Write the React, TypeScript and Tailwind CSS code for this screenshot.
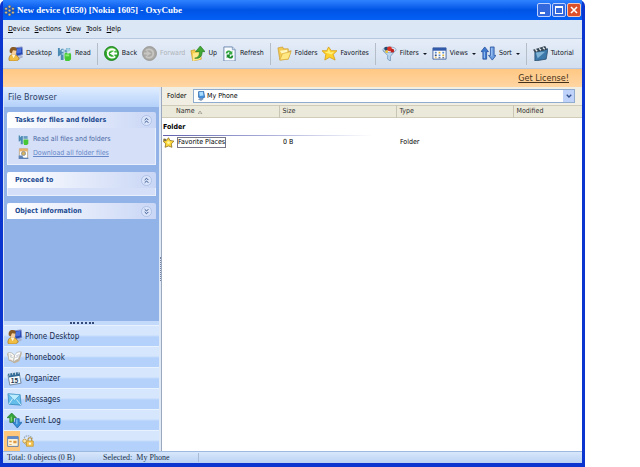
import type { ReactNode } from "react";

interface IconProps {
    className?: string;
    children: ReactNode;
}

function Icon({ className = "size-[15px]", children }: IconProps) {
    return (
        <svg viewBox="0 0 16 16" className={`${className} shrink-0`} aria-hidden="true">
            {children}
        </svg>
    );
}

const DesktopIcon = () => (
    <Icon>
        <path d="M7 2l8-1 1 8-7 2z" fill="#2448b4" stroke="#8792c8" />
        <path d="M9 3l5-1v5l-4 1z" fill="#4b73e0" />
        <path d="M10 12l5-2 1 2-5 2z" fill="#aab3cf" />
        <path d="M1 15c0-4 1-6 5-6s5 3 6 5l-3 2H2z" fill="#f0bd45" stroke="#a87416" strokeWidth=".7" />
        <path d="M4 9l2 4 2-4z" fill="#fff4d8" />
        <circle cx="6" cy="6" r="3" fill="#f7cf9c" />
        <path d="M2 7c-1-4 1-6 4-6 3 0 4 2 3 4C7 5 6 4 5 5L4 8z" fill="#8a5a24" />
    </Icon>
);

const ReadIcon = () => (
    <Icon>
        <path d="M1 2h2v3l2-2h2v12H4V9L2 11H1z" fill="#4c8bb4" />
        <path d="M5 4h2v2H5zM5 8h2v1H5z" fill="#c9edff" />
        <path d="M8 4h2V2h4v3h-3v2H8z" fill="#679bc0" />
        <circle cx="12" cy="4" r="2" fill="#a2d4e5" />
        <path d="M8 8l2-1 1 1h2l1-1 1 2v5l-2 2H9l-1-3z" fill="#45c736" />
        <path d="M9 9h4v2H9z" fill="#8bef70" />
    </Icon>
);

const BackIcon = () => (
    <Icon>
        <circle cx="8" cy="8" r="7.4" fill="#31aa2d" stroke="#167b17" />
        <path d="M2 6c2-5 10-6 12 0-5-2-8 1-12 0z" fill="#81d66d" />
        <path d="M12 5C9 2 4 4 4 8s5 6 8 3" fill="none" stroke="#fff" strokeWidth="1.8" />
        <path d="M11 5L6 8l5 3V9h3V7h-3z" fill="#fff" />
    </Icon>
);

const ForwardIcon = () => (
    <Icon>
        <circle cx="8" cy="8" r="7.4" fill="#aaa9a6" stroke="#969694" />
        <path d="M4 5c3-3 8-1 8 3s-5 6-8 3" fill="none" stroke="#c7c6c2" strokeWidth="1.8" />
        <path d="M5 5l5 3-5 3V9H2V7h3z" fill="#c7c6c2" />
    </Icon>
);

const UpIcon = () => (
    <Icon>
        <path d="M1 5l4-1 1 2h5l1 8-9 2z" fill="#f4cc4d" stroke="#c59221" strokeWidth=".7" />
        <path d="M3 8l9-2-1 8-8 2z" fill="#ffe98a" />
        <path d="M5 13c5-1 5-4 5-7H6l5-6 5 6h-3c0 5-3 8-8 7z" fill="#42a935" stroke="#24791d" strokeWidth=".7" />
    </Icon>
);

const RefreshIcon = () => (
    <Icon>
        <path d="M2 1h9l3 3v12H2z" fill="#f8fbff" stroke="#6b86ad" />
        <path d="M11 1v3h3" fill="#c8d8ec" stroke="#6b86ad" strokeWidth=".7" />
        <path d="M4 8c0-4 4-4 6-2l1-1v4H7l1-2C7 6 6 7 6 8z" fill="#36a943" />
        <path d="M12 10c0 4-4 4-6 2l-1 1V9h4l-1 2c1 1 2 0 2-1z" fill="#1c8b2c" />
    </Icon>
);

const FoldersIcon = () => (
    <Icon>
        <path d="M1 2l5-1 1 2h5v3l3-1-3 9-9 1z" fill="#f3cb53" stroke="#c8972b" strokeWidth=".7" />
        <path d="M3 5l8-1v3L5 8z" fill="#fff7bf" />
        <path d="M3 15l3-7 9-2-3 8z" fill="#ffe781" stroke="#d3a437" strokeWidth=".6" />
    </Icon>
);

const StarIcon = () => (
    <Icon>
        <path d="M7 1l3 4 6 0-4 4 2 6-6-3-5 3 1-6-4-4 5 0z" fill="#ffd22e" stroke="#d29a13" strokeWidth=".8" />
        <path d="M7 3l2 4 4-1-3 3-3-1-4-1 3-1z" fill="#fff07d" />
    </Icon>
);

const BadgeStarIcon = () => (
    <Icon className="size-[11px]">
        <path d="M8 1l2 4 6 1-4 4 1 5-5-2-5 2 1-5-4-4 5-1z" fill="#ffd93b" stroke="#8f7526" strokeWidth="1.2" />
        <path d="M1 2l4 1-1 3-4-1z" fill="#7d6f40" />
        <circle cx="8" cy="8" r="2" fill="#fff9a8" />
    </Icon>
);

const FilterIcon = () => (
    <Icon>
        <path d="M1 5l13 0-5 6v5l-3-2v-4z" fill="#bcd7ee" stroke="#6d93b8" strokeWidth=".8" />
        <ellipse cx="8" cy="4" rx="7" ry="3" fill="#e2eefa" stroke="#7692b1" strokeWidth=".7" />
        <circle cx="4.5" cy="3" r="2.2" fill="#244b70" />
        <circle cx="8" cy="3" r="2.6" fill="#dc3326" />
        <circle cx="11" cy="5" r="2" fill="#bb2320" />
        <circle cx="5" cy="6" r="1.5" fill="#edc53b" />
    </Icon>
);

const ViewsIcon = () => (
    <Icon>
        <path d="M1 2h14v12H1z" fill="#fff" stroke="#4564a0" />
        <path d="M1 2h14v3H1z" fill="#315aaa" />
        <path d="M3 6h2v2H3zM7 9h2v2H7zM11 6h2v2h-2z" fill="#568ad0" />
        <path d="M7 6h2v2H7zM3 12h2v1H3zM11 9h2v2h-2z" fill="#d6b23f" />
        <path d="M3 9h2v2H3zM7 12h2v1H7zM11 12h2v1h-2z" fill="#394d70" />
    </Icon>
);

const SortIcon = () => (
    <Icon>
        <path d="M4 1l4 5H6v8H2V6H0z" fill="#3f79cf" stroke="#234c98" strokeWidth=".8" />
        <path d="M10 1h4v9h2l-4 5-4-5h2z" fill="#6b9de2" stroke="#234c98" strokeWidth=".8" />
        <path d="M3 6h1v7H3zM11 2h1v9h-1z" fill="#a9cbf5" />
    </Icon>
);

const TutorialIcon = () => (
    <Icon>
        <path d="M2 6l14-3-2 11-12 2z" fill="#3c78a9" stroke="#254a6c" strokeWidth=".8" />
        <path d="M3 7l10-1-8 7z" fill="#80b4d6" />
        <path d="M0 4L13 0l2 4L2 7z" fill="#354653" />
        <path d="M2 4l1-1 2 2-1 1zM6 3l1-1 2 2-1 1zM10 2l1-1 2 2-1 1z" fill="#e9edf0" />
    </Icon>
);

const PhonebookIcon = () => (
    <Icon>
        <path d="M0 4l3-1 5 3 5-4 3 1-3 9-5 2-6-3z" fill="#c2b298" />
        <path d="M1 3c3-1 5 0 7 3l-1 7c-2-2-3-3-5-2z" fill="#f8f6ef" stroke="#a8aaa8" strokeWidth=".7" />
        <path d="M8 6c2-4 4-4 7-4l-3 8c-2 0-3 1-5 3z" fill="#fff" stroke="#a8aaa8" strokeWidth=".7" />
        <path d="M3 5l2 1M3 7l3 1M10 6l3-1M9 8l3-1" stroke="#9ca6b4" strokeWidth=".7" />
    </Icon>
);

const OrganizerIcon = () => (
    <Icon>
        <path d="M1 4l12-2 2 11-12 2z" fill="#f7fbff" stroke="#587084" strokeWidth=".8" />
        <path d="M1 3l12-2 1 4L2 7z" fill="#346b97" />
        <path d="M3 2v3M6 1v3M9 1v3M12 0v3" stroke="#d5e0e9" />
        <text x="4" y="13" fontSize="7" fontWeight="700" fontFamily="Liberation Sans" fill="#25374d">15</text>
    </Icon>
);

const MessagesIcon = () => (
    <Icon>
        <path d="M1 2l13 1 1 11-13-1z" fill="#64bee9" stroke="#3486bd" strokeWidth=".8" />
        <path d="M1 2l7 7 6-6z" fill="#bcecff" stroke="#4a9ccb" strokeWidth=".7" />
        <path d="M2 13l4-6M15 14l-5-6" stroke="#e3f7ff" strokeWidth=".9" />
    </Icon>
);

const EventLogIcon = () => (
    <Icon>
        <path d="M5 0l5 5H7v5H3V5H0z" fill="#36a63b" stroke="#1b7324" strokeWidth=".7" />
        <path d="M9 6h4v4h3l-5 6-5-6h3z" fill="#368ed8" stroke="#1d5da2" strokeWidth=".7" />
        <path d="M4 4h1v5H4z" fill="#a4e285" />
        <path d="M10 7h1v5h-1z" fill="#9fd4f7" />
    </Icon>
);

const BrowserIcon = () => (
    <Icon className="size-[13px]">
        <path d="M2 2h13v12H2z" fill="#fff6dc" stroke="#456da8" />
        <path d="M2 2h13v3H2z" fill="#5f8acb" />
        <path d="M4 7h3v2H4zM4 11h3v1H4zM9 7h4v3H9z" fill="#df9840" />
    </Icon>
);

const LockIcon = () => (
    <Icon className="size-[12px]">
        <path d="M3 4c1-4 9-4 11 1" fill="none" stroke="#9aa4b2" strokeWidth="1.4" strokeDasharray="2 1" />
        <path d="M8 8V6c0-3 5-3 5 0v2" fill="none" stroke="#b58a2c" strokeWidth="1.4" />
        <path d="M6 8h9v7H6z" fill="#f7c653" stroke="#c3952f" />
        <circle cx="3.5" cy="8" r="2.5" fill="#fbe6ae" stroke="#c3952f" />
        <path d="M3 11l3 2" stroke="#c3952f" />
        <circle cx="10.5" cy="11.5" r="1.5" fill="#fff" />
    </Icon>
);

const DownloadIcon = () => (
    <Icon className="size-[11px]">
        <path d="M2 1h12v14H2z" fill="#fff" stroke="#ad936c" />
        <path d="M2 1h12v4H2z" fill="#e7b16b" />
        <circle cx="8" cy="8" r="3" fill="#d7b25f" stroke="#6c7d96" />
        <path d="M1 11h5l2 3h7v2H1z" fill="#5d82b8" />
    </Icon>
);

const PhoneIcon = () => (
    <Icon className="size-[10px]">
        <path d="M4 1l8-1 2 10-6 3-4-3z" fill="#438fdb" stroke="#285b9a" />
        <path d="M5 2l6-1 1 6-6 1z" fill="#a9dcff" />
        <path d="M3 13l5-2 4 2-4 3z" fill="#819abb" />
    </Icon>
);

const AppIcon = () => (
    <Icon className="size-[11px]">
        <g fill="#d5c08c" stroke="#354566" strokeWidth=".7">
            <circle cx="8" cy="2.5" r="2" />
            <circle cx="3" cy="5.5" r="2" />
            <circle cx="13" cy="5.5" r="2" />
            <circle cx="8" cy="8" r="2" />
            <circle cx="3" cy="11" r="2" />
            <circle cx="13" cy="11" r="2" />
            <circle cx="8" cy="14" r="2" />
        </g>
    </Icon>
);

interface ToolButtonProps {
    icon: ReactNode;
    label: string;
    menu?: boolean;
    disabled?: boolean;
}

function ToolButton({ icon, label, menu, disabled }: ToolButtonProps) {
    return (
        <button
            disabled={disabled}
            className="flex shrink-0 items-center gap-[3px] whitespace-nowrap text-[#10151f] disabled:text-[#aeb2b8]"
        >
            {icon}
            {label}
            {menu && (
                <svg viewBox="0 0 6 3" className="ml-px h-[2px] w-[4px]" aria-hidden="true">
                    <path d="M0 0h6L3 3z" fill="#10151f" />
                </svg>
            )}
        </button>
    );
}

const Separator = () => <span className="mx-px h-[22px] w-px shrink-0 bg-[#b5bdc9]" />;

interface TaskPanelProps {
    title: string;
    open?: boolean;
    children?: ReactNode;
}

function TaskPanel({ title, open = true, children }: TaskPanelProps) {
    return (
        <section>
            <button className="flex h-4 w-full items-center justify-between rounded-t-xs bg-linear-to-r from-white to-[#c9d6f5] pr-1 pl-2 font-bold text-[#214a91]">
                {title}
                <svg viewBox="0 0 12 12" className="size-[11px]" fill="none" aria-hidden="true">
                    <circle cx="6" cy="6" r="5.5" fill="#d9e4fa" stroke="#a5b9e1" strokeWidth=".8" />
                    <path
                        d={open ? "M4 5.5l2-2 2 2M4 8.5l2-2 2 2" : "M4 3.5l2 2 2-2M4 6.5l2 2 2-2"}
                        stroke="#26457f"
                    />
                </svg>
            </button>
            {open && (
                <div className="border border-t-0 border-[#e9effc] bg-[#d5dff7]">{children}</div>
            )}
        </section>
    );
}

const menus = ["Device", "Sections", "View", "Tools", "Help"];

const sections = [
    { label: "Phone Desktop", icon: <DesktopIcon /> },
    { label: "Phonebook", icon: <PhonebookIcon /> },
    { label: "Organizer", icon: <OrganizerIcon /> },
    { label: "Messages", icon: <MessagesIcon /> },
    { label: "Event Log", icon: <EventLogIcon /> },
];

const navRow =
    "flex h-[21px] w-full items-center border-t border-[#e8f2ff] bg-linear-to-b from-[#d5e6fd] from-45% to-[#b3d1fa] to-55%";

function TitleBar() {
    return (
        <header className="flex h-5 items-center justify-between bg-linear-to-b from-[#2f83ff] via-[#0053e5] to-[#0560f5] px-px text-white">
            <div className="flex items-center gap-0.5">
                <AppIcon />
                <h1 className="font-['Liberation_Serif',serif] text-[9px] font-bold">
                    New device (1650) [Nokia 1605] - OxyCube
                </h1>
            </div>
            <div className="flex gap-px">
                <button aria-label="Minimize" className="size-[14px] rounded-xs border border-[#bdd0ff] bg-[#3469dd]">
                    <svg viewBox="0 0 12 12"><path d="M2 8h5v2H2z" fill="#fff" /></svg>
                </button>
                <button aria-label="Maximize" className="size-[14px] rounded-xs border border-[#bdd0ff] bg-[#3469dd]">
                    <svg viewBox="0 0 12 12"><path d="M2 2h8v8H2zM3 4h6v5H3z" fill="#fff" fillRule="evenodd" /></svg>
                </button>
                <button aria-label="Close" className="size-[14px] rounded-xs border border-[#f3c7bb] bg-[#dc4f2b]">
                    <svg viewBox="0 0 12 12"><path d="M3 3l6 6M9 3l-6 6" stroke="#fff" strokeWidth="1.6" /></svg>
                </button>
            </div>
        </header>
    );
}

function Sidebar() {
    return (
        <aside className="flex w-[155px] shrink-0 flex-col bg-[#91b3e8]">
            <h2 className="flex h-5 items-center bg-linear-to-b from-[#e0edff] to-[#b4d1fa] pl-1 text-[9px] text-[#2d4166]">
                File Browser
            </h2>
            <div className="flex flex-1 flex-col gap-[7px] px-[3px] pt-[5px]">
                <TaskPanel title="Tasks for files and folders">
                    <ul className="flex h-9 flex-col justify-center gap-[3px] pl-[10px] text-[#4968a5]">
                        <li>
                            <a href="#read" className="flex items-center gap-1">
                                <Icon className="size-[11px]">
                                    <path d="M1 2h2v3l2-2h2v12H4V9L2 11H1z" fill="#4c8bb4" />
                                    <path d="M8 3h6v4H8z" fill="#679bc0" />
                                    <path d="M8 8h7v6l-2 2H9l-1-3z" fill="#45c736" />
                                </Icon>
                                Read all files and folders
                            </a>
                        </li>
                        <li>
                            <a href="#download" className="flex items-center gap-1 text-[#6688c9] underline">
                                <DownloadIcon />
                                Download all folder files
                            </a>
                        </li>
                    </ul>
                </TaskPanel>
                <TaskPanel title="Proceed to">
                    <div className="h-[7px]" />
                </TaskPanel>
                <TaskPanel title="Object information" open={false} />
            </div>
            <div className="flex h-1 items-center justify-center bg-[#c4dafa]">
                <span className="w-6 border-t-2 border-dotted border-[#354a78]" />
            </div>
            <nav>
                {sections.map((section) => (
                    <button key={section.label} className={`${navRow} gap-[3px] pl-[3px] text-[8px] text-[#182a4c]`}>
                        {section.icon}
                        {section.label}
                    </button>
                ))}
                <div className={navRow}>
                    <button aria-label="File Browser" className="flex h-full w-4 items-center justify-center bg-[#ffc77c]">
                        <BrowserIcon />
                    </button>
                    <button aria-label="Security" className="flex h-full w-4 items-center justify-center">
                        <LockIcon />
                    </button>
                </div>
            </nav>
        </aside>
    );
}

function FileList() {
    return (
        <main className="flex min-w-0 flex-1 flex-col bg-white">
            <div className="flex h-[18px] items-center bg-[#f1efe3] pr-[7px] pl-[5px]">
                <label htmlFor="folder" className="w-[26px]">Folder</label>
                <div className="relative flex h-[14px] flex-1 items-center border border-[#8faccf] bg-white">
                    <span className="absolute left-0.5">
                        <PhoneIcon />
                    </span>
                    <select id="folder" className="h-full w-full appearance-none pl-[13px] outline-none">
                        <option>My Phone</option>
                    </select>
                    <span className="pointer-events-none absolute right-0 flex h-3 w-[11px] items-center justify-center bg-[#bfd2fa]">
                        <svg viewBox="0 0 8 6" className="w-[6px]" fill="none">
                            <path d="M1 1l3 3 3-3" stroke="#31508c" strokeWidth="1.8" />
                        </svg>
                    </span>
                </div>
            </div>
            <table className="w-full table-fixed text-left">
                <thead>
                    <tr className="h-3 border-t border-b border-[#d0ccb9] bg-[#ebe9d9] text-[#303030]">
                        <th className="w-[117px] pl-[14px] font-normal">
                            <span className="flex items-center gap-[3px]">
                                Name
                                <svg viewBox="0 0 5 4" className="h-1 w-[5px]" fill="none">
                                    <path d="M0 4l2-3 2 3z" stroke="#8e8e83" strokeWidth=".7" />
                                </svg>
                            </span>
                        </th>
                        <th className="w-[117px] border-l border-[#c9c5b4] pl-[3px] font-normal">Size</th>
                        <th className="w-[117px] border-l border-[#c9c5b4] pl-[3px] font-normal">Type</th>
                        <th className="border-l border-[#c9c5b4] pl-[3px] font-normal">Modified</th>
                    </tr>
                </thead>
                <tbody>
                    <tr className="h-[18px]">
                        <th colSpan={4} className="pt-[5px] pl-px font-bold">
                            Folder
                            <div className="mt-[3px] h-px w-1/2 bg-linear-to-r from-[#5f5fae] to-white" />
                        </th>
                    </tr>
                    <tr className="h-[13px]">
                        <td>
                            <div className="flex items-center gap-[3px] pl-px">
                                <BadgeStarIcon />
                                <span className="border border-[#777789]">Favorite Places</span>
                            </div>
                        </td>
                        <td className="pl-1">0 B</td>
                        <td className="pl-1">Folder</td>
                        <td />
                    </tr>
                </tbody>
            </table>
        </main>
    );
}

export default function App() {
    return (
        <div className="min-h-screen bg-white pr-[55px] font-['DejaVu_Sans_Condensed','DejaVu_Sans',sans-serif] text-[7px] leading-[9px] text-black">
            <div className="flex min-h-screen flex-col rounded-t-md border-x-[3px] border-b-4 border-[#0a35cf] bg-[#dde8f7]">
                <TitleBar />
                <nav className="flex h-[18px] items-center gap-[5px] bg-[#dce7f6] pl-[5px]">
                    {menus.map((menu) => (
                        <button key={menu}>
                            <span className="underline">{menu[0]}</span>
                            {menu.slice(1)}
                        </button>
                    ))}
                </nav>
                <div className="flex h-[31px] items-center gap-[5px] border-y border-[#b7c7df] bg-linear-to-b from-[#e5edf8] to-[#d3dfef] px-[5px]">
                    <ToolButton icon={<DesktopIcon />} label="Desktop" />
                    <ToolButton icon={<ReadIcon />} label="Read" />
                    <Separator />
                    <ToolButton icon={<BackIcon />} label="Back" />
                    <ToolButton icon={<ForwardIcon />} label="Forward" disabled />
                    <ToolButton icon={<UpIcon />} label="Up" />
                    <ToolButton icon={<RefreshIcon />} label="Refresh" />
                    <Separator />
                    <ToolButton icon={<FoldersIcon />} label="Folders" />
                    <ToolButton icon={<StarIcon />} label="Favorites" />
                    <Separator />
                    <ToolButton icon={<FilterIcon />} label="Filters" menu />
                    <ToolButton icon={<ViewsIcon />} label="Views" menu />
                    <ToolButton icon={<SortIcon />} label="Sort" menu />
                    <Separator />
                    <ToolButton icon={<TutorialIcon />} label="Tutorial" />
                </div>
                <div className="flex h-[18px] items-center justify-end bg-linear-to-b from-[#ffc883] to-[#ffd5a2] pr-[13px]">
                    <a href="#license" className="text-[9px] text-[#443018] underline">Get License!</a>
                </div>
                <div className="flex flex-1 pl-px">
                    <Sidebar />
                    <div className="flex w-[3px] shrink-0 items-center justify-center border-r border-[#9ba8bd] bg-[#dfe8f5]">
                        <span className="h-6 border-l border-dotted border-[#7483a0]" />
                    </div>
                    <FileList />
                </div>
                <footer className="flex h-3 items-center border-t border-[#9db9df] bg-linear-to-b from-[#d8e7fb] to-[#b9d2f3] pl-1 font-['Liberation_Serif',serif] text-[8px] text-[#20304b]">
                    <span className="w-24">Total: 0 objects (0 B)</span>
                    <span className="w-24 border-r border-[#a8bcd8]">Selected:&nbsp; My Phone</span>
                </footer>
            </div>
        </div>
    );
}
